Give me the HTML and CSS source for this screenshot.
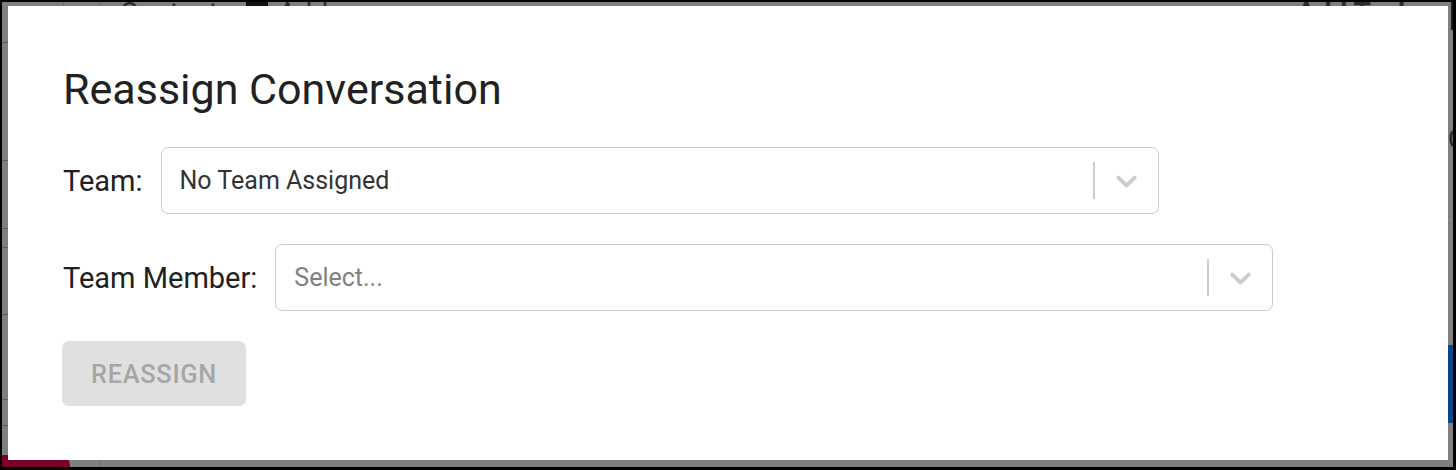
FILE: index.html
```html
<!DOCTYPE html>
<html lang="en">
	<head>
		<meta charset="UTF-8" />
		<meta name="viewport" content="width=device-width, initial-scale=1.0" />
		<title>Reassign Conversation</title>
		<link rel="stylesheet" href="styles.css">
	</head>

	<body>
		<div class="screen">
			<!-- page behind the dialog, dimmed by the backdrop -->
			<div class="page">
				<div class="topbar">
					<span class="crumb">Contacts</span>
					<span class="crumb-icon"></span>
					<span class="crumb">Address</span>
					<span class="spacer"></span>
					<span class="plus">+</span>
					<span class="crumb">Add Task</span>
				</div>
				<div class="col-line first"></div>
				<div class="col-line second"></div>
				<div class="rows">
					<div class="row"></div>
					<div class="row"></div>
					<div class="row"></div>
					<div class="row"></div>
					<div class="row"></div>
					<div class="row"></div>
					<div class="row"></div>
				</div>
				<div class="edge-letter">C</div>
				<div class="edge-line"></div>
				<div class="edge-blue"></div>
				<div class="edge-dark"></div>
				<div class="badge"></div>
			</div>

			<!-- dialog -->
			<div class="dialog">
				<h2 class="dialog-title">Reassign Conversation</h2>

				<div class="field">
					<label class="field-label">Team:</label>
					<div class="select">
						<div class="select-value">No Team Assigned</div>
						<span class="select-sep"></span>
						<span class="select-arrow">
							<svg viewBox="0 0 20 20" width="35" height="35"><path d="M4.516 7.548c0.436-0.446 1.043-0.481 1.576 0l3.908 3.747 3.908-3.747c0.533-0.481 1.141-0.446 1.574 0 0.436 0.445 0.408 1.197 0 1.615-0.406 0.418-4.695 4.502-4.695 4.502-0.217 0.223-0.502 0.335-0.787 0.335s-0.57-0.112-0.789-0.335c0 0-4.287-4.084-4.695-4.502s-0.436-1.17 0-1.615z"/></svg>
						</span>
					</div>
				</div>

				<div class="field">
					<label class="field-label">Team Member:</label>
					<div class="select">
						<div class="select-value placeholder">Select...</div>
						<span class="select-sep"></span>
						<span class="select-arrow">
							<svg viewBox="0 0 20 20" width="35" height="35"><path d="M4.516 7.548c0.436-0.446 1.043-0.481 1.576 0l3.908 3.747 3.908-3.747c0.533-0.481 1.141-0.446 1.574 0 0.436 0.445 0.408 1.197 0 1.615-0.406 0.418-4.695 4.502-4.695 4.502-0.217 0.223-0.502 0.335-0.787 0.335s-0.57-0.112-0.789-0.335c0 0-4.287-4.084-4.695-4.502s-0.436-1.17 0-1.615z"/></svg>
						</span>
					</div>
				</div>

				<button class="btn" disabled>Reassign</button>
			</div>
		</div>
	</body>
</html>
```

FILE: styles.css
```css
body {
	margin: 0;
	padding: 0;
	background-color: #000;
	font-family: Roboto, "Liberation Sans", sans-serif;
}
.screen {
	position: relative;
	margin: 2px 3px 0 2px;
	height: 465px;
	background-color: #7f7f7f;
	overflow: hidden;
}

/* page behind */
.page {
	height: 100%;
}
.topbar {
	display: flex;
	align-items: center;
	margin-top: -3px;
	padding-left: 118px;
	font-size: 28px;
	line-height: 28px;
	color: #2b2b2b;
}
.crumb-icon {
	width: 22px;
	height: 22px;
	margin: 0 10px 0 14px;
	background-color: #111;
}
.spacer {
	flex: 1;
}
.plus {
	margin-right: 22px;
}
.topbar .crumb:last-child {
	margin-right: 40px;
	font-weight: 700;
}
.col-line {
	position: absolute;
	top: 0;
	bottom: 0;
	width: 1px;
	background-color: #6e6e6e;
}
.col-line.first {
	left: 61px;
}
.col-line.second {
	left: 98px;
}
.rows {
	position: absolute;
	top: 0;
	left: 0;
	width: 6px;
}
.row {
	border-bottom: 1px solid #5c5c5c;
}
.row:nth-child(1) { height: 40px; }
.row:nth-child(2) { height: 117px; }
.row:nth-child(3) { height: 67px; }
.row:nth-child(4) { height: 18px; }
.row:nth-child(5) { height: 66px; }
.row:nth-child(6) { height: 84px; }
.row:nth-child(7) { height: 25px; }
.edge-letter {
	position: absolute;
	top: 122px;
	left: 1446px;
	font-size: 26px;
	color: #222;
}
.edge-line {
	position: absolute;
	top: 218px;
	left: 1446px;
	width: 10px;
	height: 1px;
	background-color: #8c8c8c;
}
.edge-blue {
	position: absolute;
	top: 343px;
	left: 1446px;
	width: 10px;
	height: 78px;
	background-color: #0b448a;
}
.edge-dark {
	position: absolute;
	top: 0;
	left: 1449px;
	width: 3px;
	height: 28px;
	background-color: #1a1a1a;
}
.badge {
	position: absolute;
	left: 0;
	bottom: 0;
	width: 68px;
	height: 12px;
	background-color: #7a0028;
	border-radius: 0 10px 0 0;
}

/* dialog */
.dialog {
	position: absolute;
	top: 4px;
	left: 6px;
	width: 1440px;
	height: 454px;
	box-sizing: border-box;
	padding: 57px 55px 0;
	background-color: #fff;
}
.dialog-title {
	margin: 0 0 32px;
	font-size: 43px;
	font-weight: 400;
	line-height: 52px;
	color: #212121;
}
.field {
	display: flex;
	align-items: center;
	margin-bottom: 30px;
}
.field-label {
	margin-right: 18px;
	font-size: 29px;
	color: #212121;
}
.select {
	display: flex;
	align-items: stretch;
	width: 998px;
	height: 67px;
	box-sizing: border-box;
	border: 1px solid #ccc;
	border-radius: 7px;
}
.select-value {
	flex: 1;
	display: flex;
	align-items: center;
	padding: 0 14px 0 18px;
	font-size: 25px;
	color: #333;
}
.select-value.placeholder {
	color: #808080;
}
.select-sep {
	width: 2px;
	margin: 14px 0;
	background-color: #ccc;
}
.select-arrow {
	display: flex;
	align-items: center;
	padding: 0 14px;
}
.select-arrow svg {
	fill: #ccc;
}
.btn {
	height: 65px;
	margin-left: -1px;
	padding: 0 29px;
	border: none;
	border-radius: 7px;
	background-color: #e0e0e0;
	color: #a6a6a6;
	font-family: Roboto, "Liberation Sans", sans-serif;
	font-size: 25.4px;
	font-weight: 500;
	letter-spacing: 0.7px;
	text-transform: uppercase;
}
```
